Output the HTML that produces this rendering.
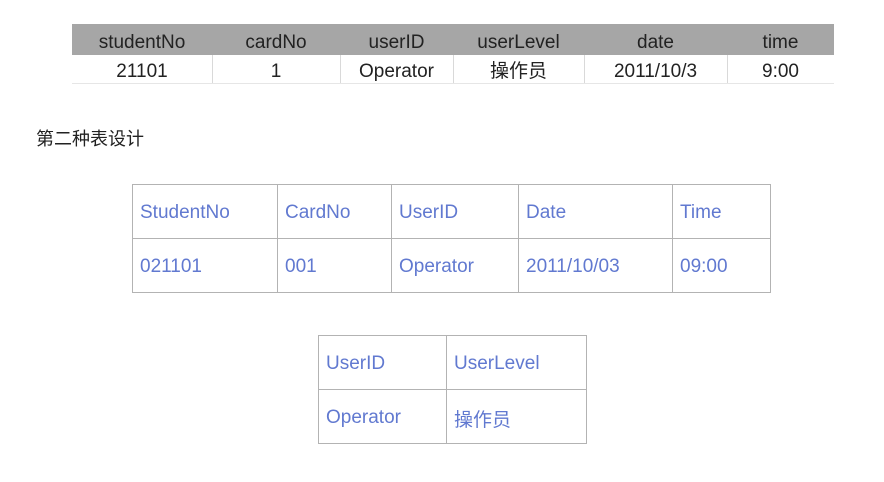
<!DOCTYPE html>
<html><head><meta charset="utf-8"><style>
body{margin:0;width:884px;height:482px;background:#fff;position:relative;overflow:hidden;font-family:"Liberation Sans","Noto Sans CJK SC",sans-serif}
.t1{position:absolute;left:72px;top:24px;width:762px;height:60px}
.t1 .h{position:absolute;left:0;top:0;width:762px;height:31px;background:#a6a6a6}
.t1 .cell{position:absolute;text-align:center;font-size:19px;color:#222;line-height:29px}
.vl{position:absolute;width:1px;background:#d9d9d9}
.tb{position:absolute;border-collapse:collapse}
.tb td{border:1px solid #b3b3b3;color:#6179d0;font-size:19px;padding:3px 0 0 7px;box-sizing:border-box;vertical-align:middle}
h2{position:absolute;left:36px;top:125px;margin:0;font-size:18px;font-weight:normal;color:#222}
</style></head><body>
<div class="t1">
<div class="h"></div>
<div class="vl" style="left:140px;top:31px;height:29px"></div>
<div class="vl" style="left:268px;top:31px;height:29px"></div>
<div class="vl" style="left:381px;top:31px;height:29px"></div>
<div class="vl" style="left:512px;top:31px;height:29px"></div>
<div class="vl" style="left:655px;top:31px;height:29px"></div>
<div style="position:absolute;left:0;top:59px;width:762px;height:1px;background:#e6e6e6"></div>
<div class="cell" style="left:0;width:140px;top:4px">studentNo</div>
<div class="cell" style="left:140px;width:128px;top:4px">cardNo</div>
<div class="cell" style="left:268px;width:113px;top:4px">userID</div>
<div class="cell" style="left:381px;width:131px;top:4px">userLevel</div>
<div class="cell" style="left:512px;width:143px;top:4px">date</div>
<div class="cell" style="left:655px;width:107px;top:4px">time</div>
<div class="cell" style="left:0;width:140px;top:33px">21101</div>
<div class="cell" style="left:140px;width:128px;top:33px">1</div>
<div class="cell" style="left:268px;width:113px;top:33px">Operator</div>
<div class="cell" style="left:381px;width:131px;top:33px">操作员</div>
<div class="cell" style="left:512px;width:143px;top:33px">2011/10/3</div>
<div class="cell" style="left:655px;width:107px;top:33px">9:00</div>
</div>
<h2>第二种表设计</h2>
<table class="tb" style="left:132px;top:184px;width:639px">
<tr style="height:54px"><td style="width:145px">StudentNo</td><td style="width:114px">CardNo</td><td style="width:127px">UserID</td><td style="width:154px">Date</td><td>Time</td></tr>
<tr style="height:54px"><td>021101</td><td>001</td><td>Operator</td><td>2011/10/03</td><td>09:00</td></tr>
</table>
<table class="tb" style="left:318px;top:335px;width:269px">
<tr style="height:54px"><td style="width:128px">UserID</td><td>UserLevel</td></tr>
<tr style="height:54px"><td>Operator</td><td>操作员</td></tr>
</table>
</body></html>
